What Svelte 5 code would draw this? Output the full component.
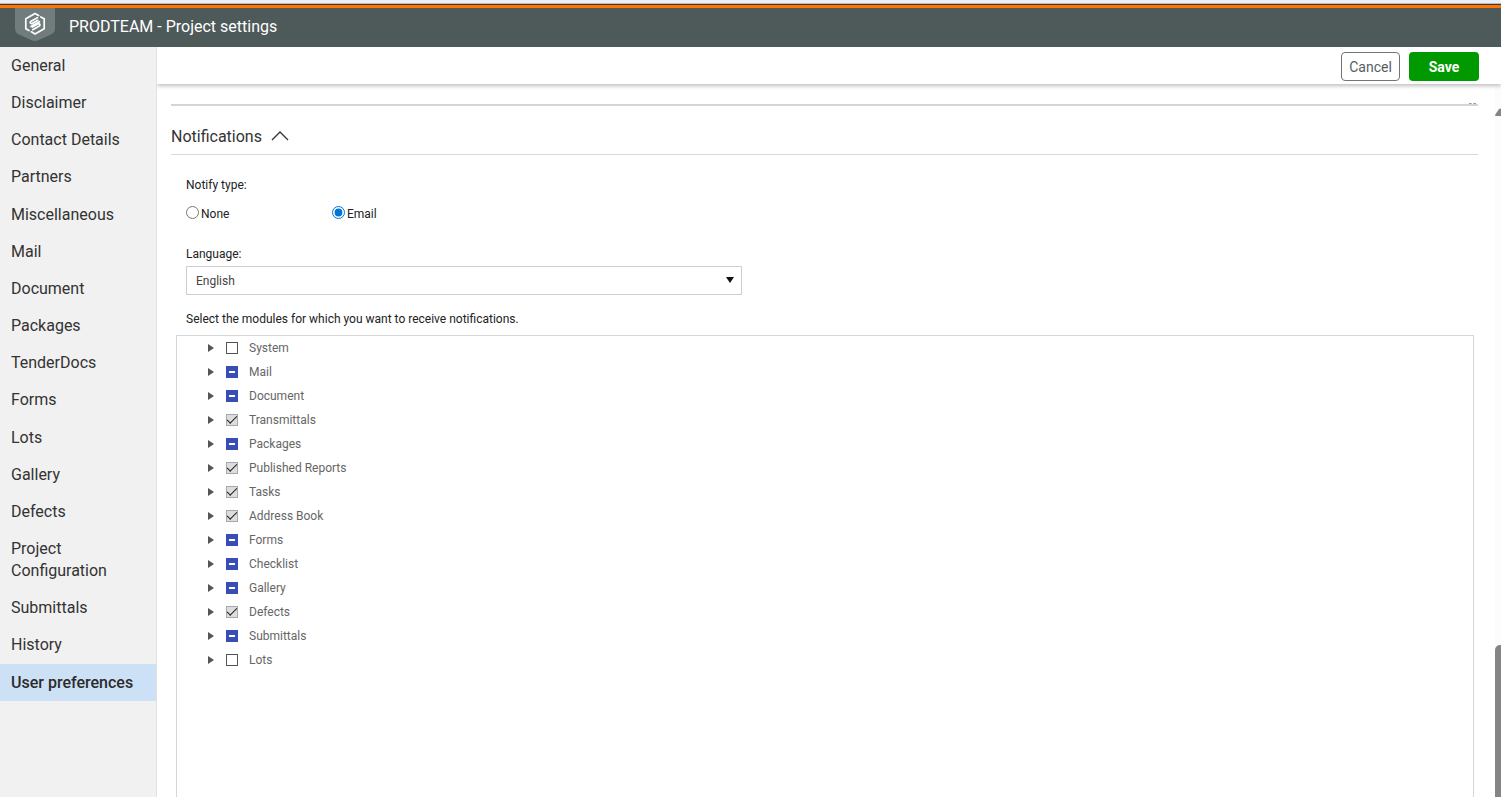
<script lang="ts">
  type ModuleState = 'off' | 'partial' | 'locked';

  interface Module {
    name: string;
    state: ModuleState;
  }

  const sections = [
    'General',
    'Disclaimer',
    'Contact Details',
    'Partners',
    'Miscellaneous',
    'Mail',
    'Document',
    'Packages',
    'TenderDocs',
    'Forms',
    'Lots',
    'Gallery',
    'Defects',
    'Project Configuration',
    'Submittals',
    'History',
    'User preferences',
  ];

  const modules: Module[] = [
    { name: 'System', state: 'off' },
    { name: 'Mail', state: 'partial' },
    { name: 'Document', state: 'partial' },
    { name: 'Transmittals', state: 'locked' },
    { name: 'Packages', state: 'partial' },
    { name: 'Published Reports', state: 'locked' },
    { name: 'Tasks', state: 'locked' },
    { name: 'Address Book', state: 'locked' },
    { name: 'Forms', state: 'partial' },
    { name: 'Checklist', state: 'partial' },
    { name: 'Gallery', state: 'partial' },
    { name: 'Defects', state: 'locked' },
    { name: 'Submittals', state: 'partial' },
    { name: 'Lots', state: 'off' },
  ];

  let active = $state('User preferences');
  let notifyType = $state('email');
  let language = $state('English');
  let open = $state(true);

  function select(event: MouseEvent, section: string) {
    event.preventDefault();
    active = section;
  }
</script>

<div class="page">
  <header class="topbar">
    <svg class="logo" viewBox="0 0 40 34" aria-hidden="true">
      <path d="M0 0H40V21Q40 24 37 26L24 32Q20 34 16 32L3 26Q0 24 0 21Z" fill="#717d7d" />
      <g fill="none" stroke="#fff" stroke-width="1.7" stroke-linejoin="round" stroke-linecap="round">
        <path d="M14 22.6L10.8 20.7V10.8L20 5.5L23.6 7.6" />
        <path d="M25.8 8.9L29.2 10.8V20.7L20 25.9L16.4 23.8" />
        <path d="M22.4 9.7L15.6 13.5Q14.4 15 16.8 15.7L22.8 12.3" />
        <path d="M16 18.5L24.4 13.7" />
        <path d="M17.8 21.7L24.6 17.7Q25.6 16.3 23.6 15.6L17.4 19.1" />
      </g>
    </svg>
    <h1>PRODTEAM - Project settings</h1>
  </header>

  <div class="body">
    <nav class="sidebar" aria-label="Project settings">
      <ul>
        {#each sections as section (section)}
          <li>
            <a href="#settings" class:active={active === section} onclick={(e) => select(e, section)}>{section}</a>
          </li>
        {/each}
      </ul>
    </nav>

    <main>
      <div class="actions">
        <button type="button" class="cancel">Cancel</button>
        <button type="button" class="save">Save</button>
      </div>

      <div class="scroll">
        <div class="content">
          <div class="divider"></div>

          <h2>
            <button type="button" class="toggle" aria-expanded={open} onclick={() => (open = !open)}>
              Notifications
              <svg class:closed={!open} width="18" height="10" viewBox="0 0 18 10" aria-hidden="true">
                <path d="M1 9L9 1L17 9" fill="none" stroke="#333" stroke-width="1.3" />
              </svg>
            </button>
          </h2>

          {#if open}
            <div class="fields">
              <fieldset>
                <legend>Notify type:</legend>
                <label><input type="radio" name="notify" value="none" bind:group={notifyType} />None</label>
                <label><input type="radio" name="notify" value="email" bind:group={notifyType} />Email</label>
              </fieldset>

              <label class="caption" for="language">Language:</label>
              <div class="select">
                <select id="language" bind:value={language}>
                  <option>English</option>
                </select>
                <svg width="8" height="6" viewBox="0 0 8 6" aria-hidden="true"><path d="M0 0H8L4 6Z" fill="#111" /></svg>
              </div>

              <p>Select the modules for which you want to receive notifications.</p>
            </div>

            <ul class="tree">
              {#each modules as mod (mod.name)}
                <li>
                  <button type="button" class="expand" aria-label="Expand {mod.name}">
                    <svg width="6" height="8" viewBox="0 0 6 8" aria-hidden="true"><path d="M0 0L6 4L0 8Z" fill="#555" /></svg>
                  </button>
                  <label>
                    <input
                      type="checkbox"
                      checked={mod.state === 'locked'}
                      indeterminate={mod.state === 'partial'}
                      disabled={mod.state === 'locked'}
                    />
                    {mod.name}
                  </label>
                </li>
              {/each}
            </ul>
          {/if}
        </div>

        <div class="scrollbar" aria-hidden="true">
          <svg width="12" height="8" viewBox="0 0 12 8"><path d="M1 8Q0 8 0 7L4 1Q6 0 8 1L12 7V8Z" fill="#858585" /></svg>
          <div class="thumb"></div>
        </div>
      </div>
    </main>
  </div>
</div>

<style>
  :global(body) {
    margin: 0;
    background: #fff;
  }

  .page {
    display: flex;
    flex-direction: column;
    height: 100vh;
    overflow: hidden;
    font-family: Roboto, 'Liberation Sans', sans-serif;
    font-size: 12px;
    color: #333;
  }

  ul,
  h1,
  h2,
  p {
    margin: 0;
    padding: 0;
    list-style: none;
  }

  button,
  select {
    font-family: inherit;
  }

  .topbar {
    flex: none;
    display: flex;
    align-items: flex-start;
    gap: 14px;
    height: 39px;
    padding-left: 15px;
    border-top: 3px solid #ff7300;
    background: #4e595a;
    margin-top: 5px;
    box-shadow: 0 -1px #4a3527, 0 -2px #b9bcc2, 0 -5px #e9eff7;
  }

  .logo {
    width: 40px;
    height: 34px;
  }

  h1 {
    font-size: 16px;
    font-weight: 400;
    line-height: 38px;
    color: #fff;
  }

  .body {
    flex: 1;
    display: flex;
    min-height: 0;
  }

  .sidebar {
    flex: none;
    width: 156px;
    border-right: 1px solid #e2e2e2;
    background: #f1f1f1;
  }

  .sidebar ul {
    display: flex;
    flex-direction: column;
    justify-content: space-between;
    height: 82vh;
  }

  .sidebar a {
    display: block;
    padding: 8px 11px 7px;
    font-size: 16px;
    line-height: 22px;
    color: #333;
    text-decoration: none;
  }

  .sidebar a.active {
    background: #cce0f6;
    font-weight: 500;
    color: #2b2b2b;
  }

  main {
    flex: 1;
    display: flex;
    flex-direction: column;
    min-width: 0;
  }

  .actions {
    flex: none;
    display: flex;
    justify-content: flex-end;
    gap: 9px;
    padding: 5px 22px 3px;
    box-shadow: 0 2px 4px rgba(0, 0, 0, 0.25);
    clip-path: inset(0 0 -8px 0);
  }

  .actions button {
    height: 29px;
    padding: 0;
    border-radius: 4px;
    font-size: 14px;
    cursor: pointer;
  }

  .actions .cancel {
    width: 59px;
    border: 1px solid #6d7777;
    background: #fff;
    color: #555e5e;
  }

  .actions .save {
    width: 70px;
    border: 0;
    background: #009a00;
    font-weight: 700;
    color: #fff;
  }

  .scroll {
    flex: 1;
    display: flex;
    min-height: 0;
  }

  .content {
    flex: 1;
    display: flex;
    flex-direction: column;
    min-width: 0;
    padding: 20px 17px 0 14px;
  }

  .divider {
    position: relative;
    flex: none;
    height: 2px;
    background: #d4d4d4;
  }

  .divider::after {
    content: '';
    position: absolute;
    top: -1px;
    right: 2px;
    width: 7px;
    border-top: 1px dashed #999;
  }

  h2 {
    flex: none;
    border-bottom: 1px solid #d9d9d9;
  }

  .toggle {
    display: flex;
    align-items: center;
    gap: 9px;
    height: 48px;
    padding: 12px 0 0;
    border: 0;
    background: none;
    font-size: 16px;
    color: #333;
    cursor: pointer;
  }

  .closed {
    transform: rotate(180deg);
  }

  .fields {
    flex: none;
    padding: 22px 15px 8px;
    line-height: 16px;
    color: #222;
  }

  fieldset {
    display: flex;
    margin: 0 0 24px;
    padding: 0;
    border: 0;
  }

  legend {
    margin-bottom: 13px;
    padding: 0;
  }

  fieldset label {
    display: flex;
    align-items: flex-start;
    gap: 2px;
    width: 146px;
  }

  fieldset input {
    width: 13px;
    height: 13px;
    margin: 0;
    accent-color: #0075d8;
  }

  .caption {
    display: block;
    margin-bottom: 4px;
  }

  .select {
    position: relative;
    width: 556px;
    max-width: 100%;
    margin-bottom: 16px;
  }

  select {
    display: block;
    width: 100%;
    height: 29px;
    padding: 0 9px;
    border: 1px solid #cfcfcf;
    border-radius: 0;
    appearance: none;
    background: #fff;
    font-size: 12px;
    color: #444;
  }

  .select svg {
    position: absolute;
    top: 11px;
    right: 8px;
    pointer-events: none;
  }

  .tree {
    flex: 1;
    margin: 0 4px 0 5px;
    border: 1px solid #d6d6d6;
    border-bottom: 0;
    min-height: 0;
  }

  .tree li {
    display: flex;
    align-items: center;
    gap: 12px;
    height: 24px;
    padding-left: 31px;
  }

  .expand {
    display: flex;
    padding: 0;
    border: 0;
    background: none;
    cursor: pointer;
  }

  .tree label {
    display: flex;
    align-items: center;
    gap: 11px;
    color: #666;
  }

  .tree input {
    display: grid;
    place-items: center;
    width: 12px;
    height: 12px;
    margin: 0;
    border: 1px solid #555;
    appearance: none;
    background: #fff;
  }

  .tree input:indeterminate {
    border-color: #3a4cb8;
    background: #3a4cb8;
  }

  .tree input:indeterminate::before {
    content: '';
    width: 6px;
    height: 2px;
    background: #fff;
  }

  .tree input:disabled {
    border-color: #aaa;
    background: #ddd;
  }

  .tree input:checked::before {
    content: '';
    width: 9px;
    height: 4px;
    border-bottom: 1px solid #222;
    border-left: 1px solid #222;
    transform: translateY(-2px) rotate(-45deg);
  }

  .scrollbar {
    flex: none;
    display: flex;
    flex-direction: column;
    justify-content: space-between;
    width: 6px;
    padding-top: 24px;
    overflow: hidden;
    background: #fcfcfc;
  }

  .thumb {
    width: 12px;
    height: 22%;
    border-radius: 5px 0 0;
    background: #858585;
  }
</style>
